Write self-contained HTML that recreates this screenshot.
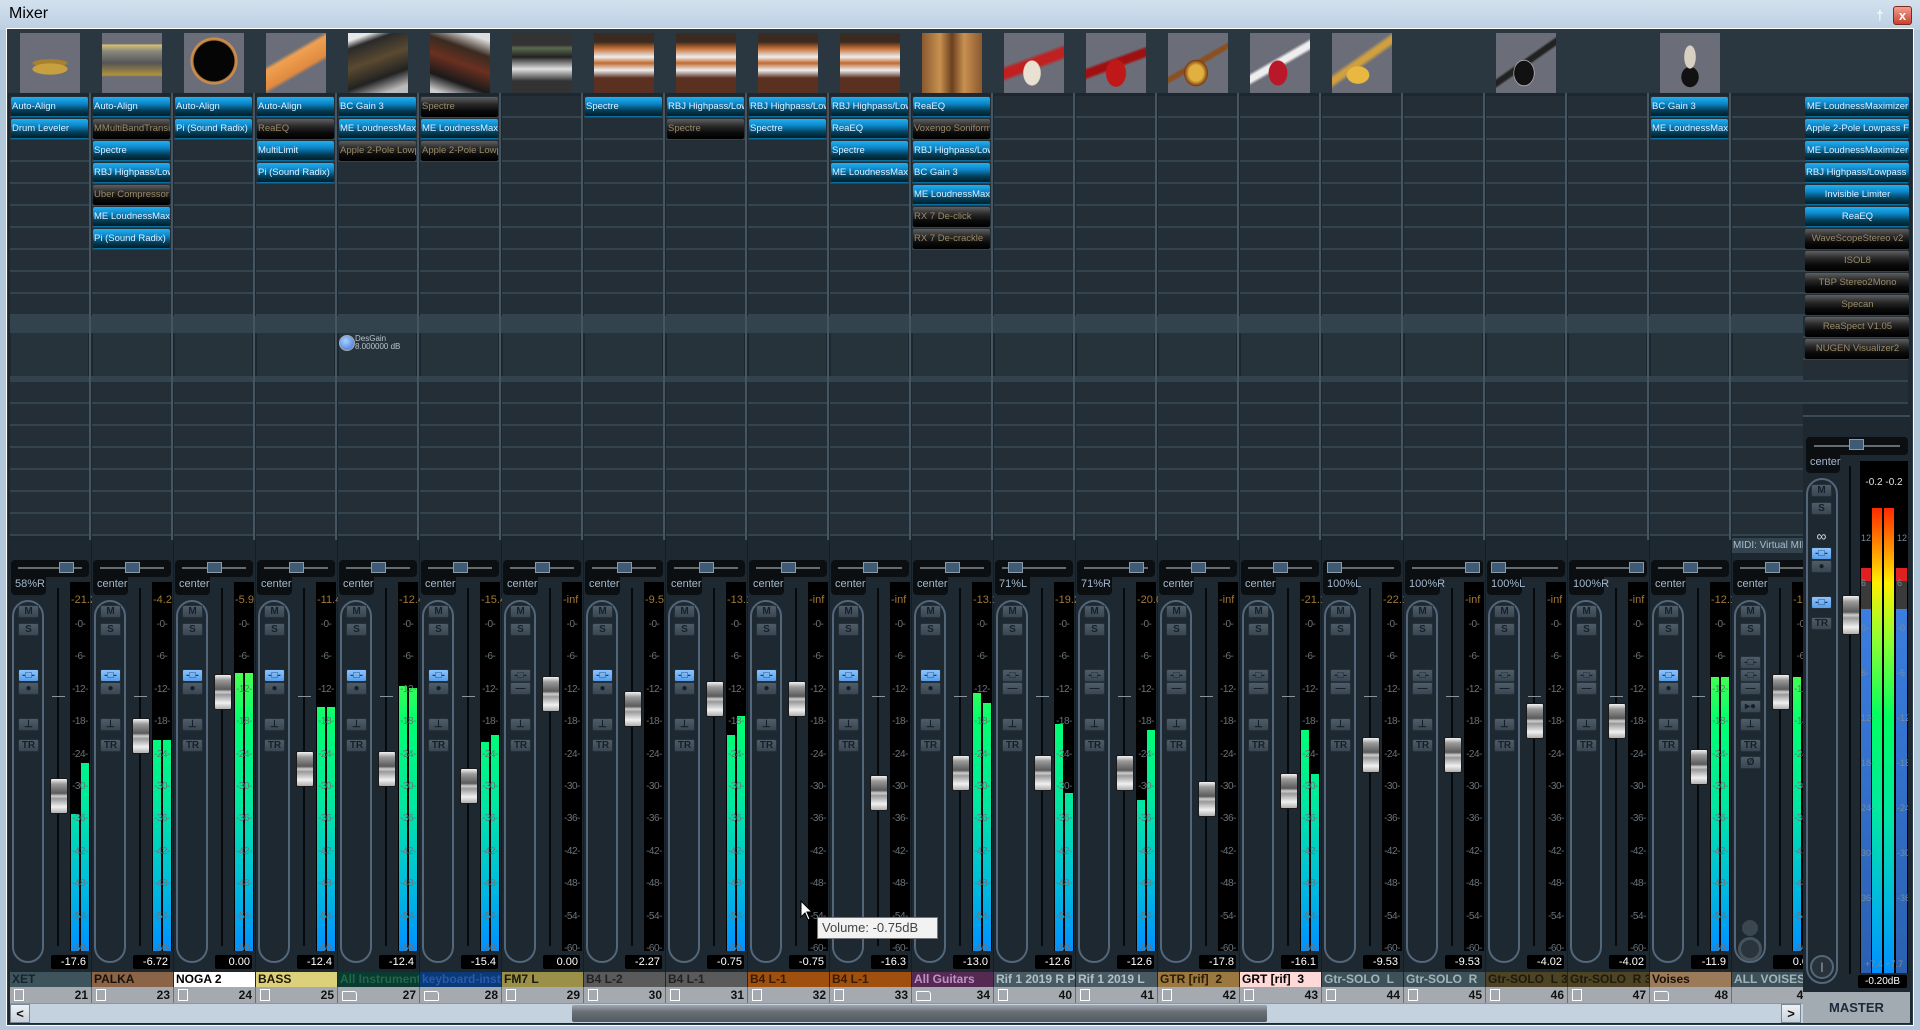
<!DOCTYPE html>
<html><head><meta charset="utf-8"><style>
*{margin:0;padding:0;box-sizing:border-box}
body{width:1920px;height:1030px;overflow:hidden;background:#b3c7db;font-family:"Liberation Sans",sans-serif;position:relative}
.tb{position:absolute;left:0;top:0;width:1920px;height:30px;background:linear-gradient(#d3e1ee,#bccfe2)}
.tt{position:absolute;left:9px;top:5px;font-size:16px;color:#000}
.win{position:absolute;left:7px;top:29px;width:1906px;height:996px;background:#1c2730;border:1px solid #2c3a46;box-shadow:0 0 0 1px #fff}
.top{position:absolute;left:8px;top:30px;width:1904px;height:63px;background:#2a3640}
.s{position:absolute;top:0;width:82px;height:1003px}
.im{position:absolute;left:10px;top:33px;width:60px;height:60px;background:#6b6e79;overflow:hidden}
.sl{position:absolute;left:0;top:96px;width:79px;height:220px;background:repeating-linear-gradient(#232e36 0 20px,#34444e 20px 22px)}
.sl2{position:absolute;left:0;top:382px;width:79px;height:154px;background:repeating-linear-gradient(#232e36 0 20px,#34444e 20px 22px)}
.bd1{position:absolute;left:0;top:316px;width:82px;height:17px;background:#33434e}
.snd{position:absolute;left:1px;top:333px;width:77px;height:43px;background:#27333b}
.bd2{position:absolute;left:0;top:376px;width:82px;height:6px;background:#33434e}
.dv{position:absolute;left:79px;top:93px;width:2px;height:447px;border-left:2px solid #455562}
.low{position:absolute;left:0;top:540px;width:82px;height:432px;background:#1d2830;border-right:1px solid #141d23}
.i{position:absolute;left:1px;width:77px;height:20px;font-size:9.5px;line-height:19px;padding-left:1px;white-space:nowrap;overflow:hidden;border-radius:2px}
.a{background:linear-gradient(#22b0f0 0%,#0b86c8 35%,#04405c 70%,#021c26 100%);color:#dcefff;border-bottom:1px solid #0b6fa0}
.d{background:linear-gradient(#606060 0%,#2a2a2a 35%,#0a0a0a 70%,#000 100%);color:#9a8a68}
.pan{position:absolute;left:1px;top:560px;width:78px;height:17px;background:#0b0f12;border-radius:4px}
.pan:before{content:"";position:absolute;left:7px;top:7px;width:64px;height:2px;background:#666c70}
.pan i{position:absolute;top:2px;width:15px;height:11px;background:#3e5a74;border:1px solid #8a9aa8}
.pt{position:absolute;left:1px;top:574px;width:35px;height:21px;background:#0b0f12;border-radius:0 0 4px 4px;color:#a4b8cc;font-size:11px;line-height:20px;padding-left:4px;white-space:nowrap}
.g{position:absolute;left:2px;top:600px;width:32px;height:363px;border:2px solid #53667a;border-radius:16px}
.b{position:absolute;left:8px;width:21px;height:13px;background:linear-gradient(#4f5d69,#3a4651);border:1px solid #24303a;border-radius:2px;color:#15202a;font:bold 10px/11px "Liberation Sans",sans-serif;text-align:center}
.bl{background:linear-gradient(#8cc4ff,#5a9ee8);color:#163a66}
.mt{position:absolute;left:60px;top:582px;width:20px;height:369px;background:#000;overflow:hidden}
.bar{position:absolute;width:8px;bottom:0;background:linear-gradient(#c0ff30 0%,#60ff40 20%,#00ff70 38%,#00e8a0 60%,#00c0d8 80%,#0090ff 100%);background-size:8px 369px;background-position:bottom}
.sc{position:absolute;left:57px;top:609px;width:26px;text-align:center;font-size:10px;line-height:32.4px;color:#6a747c;letter-spacing:-.5px}
.pk{position:absolute;left:61px;top:594px;font-size:11px;color:#a07838;white-space:nowrap;width:21px;overflow:hidden}
.ft{position:absolute;left:47px;top:588px;width:2px;height:358px;background:#070a0c}
.cm{position:absolute;left:42px;top:696px;width:13px;height:1px;background:#8a949c}
.cap{position:absolute;left:40px;width:18px;height:36px;border:1px solid #1a1a1a;border-radius:2px;background:linear-gradient(#f4f4f4,#9a9a9a 15%,#5a5a5a 42%,#cfcfcf 50%,#9a9a9a 58%,#f0f0f0 82%,#b0b0b0)}
.vb{position:absolute;left:41px;top:955px;width:37px;height:14px;background:#000;border-radius:2px;color:#fff;font-size:11px;line-height:14px;text-align:right;padding-right:2px}
.nm{position:absolute;left:0;top:972px;width:82px;height:15px;font:bold 12px/15px "Liberation Sans",sans-serif;padding-left:2px;white-space:nowrap;overflow:hidden;border-right:1px solid #1c2730}
.nu{position:absolute;left:0;top:987px;width:82px;height:16px;background:#a4aab0;font:bold 12px/16px "Liberation Sans",sans-serif;text-align:right;padding-right:3px;color:#111;border-right:1px solid #6a7078}
.ic{position:absolute;left:4px;top:2px;width:10px;height:12px;border:1px solid #fff}
.fo{position:absolute;left:4px;top:4px;width:15px;height:10px;border:1px solid #fff;border-radius:1px 3px 1px 1px}
</style></head><body>
<div class="tb"><div class="tt">Mixer</div>
<div style="position:absolute;left:1876px;top:7px;font-size:14px;color:#fff">&#x2020;</div>
<div style="position:absolute;left:1893px;top:6px;width:19px;height:19px;background:linear-gradient(#f0a090,#c84030);border:1px solid #7a2a20;border-radius:3px;color:#fff;font:bold 13px/17px 'Liberation Sans';text-align:center">x</div></div>
<div class="win"></div>
<div class="top"></div>

<div class="s" style="left:10px"><div class="im" style="background:radial-gradient(ellipse 28px 9px at 30px 36px,#c8a040 60%,transparent 65%),radial-gradient(ellipse 28px 6px at 30px 30px,#a88030 60%,transparent 65%),#6b6e79"></div>
<div class="sl"></div><div class="bd1"></div><div class="snd"></div><div class="bd2"></div><div class="sl2"></div><div class="dv"></div>
<div class="i a" style="top:97px">Auto-Align</div><div class="i a" style="top:119px">Drum Leveler</div>
<div class="low"></div><div class="pan"><i style="left:48px"></i></div><div class="pt">58%R</div>
<div class="g"></div><div class="b" style="top:605px">M</div><div class="b" style="top:623px">S</div><div class="b bl" style="top:669px">-□-</div><div class="b" style="top:682px">●</div><div class="b" style="top:718px">⊥</div><div class="b" style="top:739px">TR</div>
<div class="mt"><div class="bar" style="left:1px;top:232px"></div><div class="bar" style="left:11px;top:181px"></div></div><div class="pk">-21.2</div>
<div class="sc">-0-<br>-6-<br>-12-<br>-18-<br>-24-<br>-30-<br>-36-<br>-42-<br>-48-<br>-54-<br>-60-</div>
<div class="ft"></div><div class="cm"></div><div class="cap" style="top:778px"></div><div class="vb">-17.6</div>
<div class="nm" style="background:#3d545c;color:#16242a">XET</div><div class="nu"><span class="ic"></span>21</div></div>

<div class="s" style="left:92px"><div class="im" style="background:linear-gradient(#6b6e79 18%,#d8c070 20%,#8a8a80 30%,#555 50%,#b09040 70%,#6b6e79 73%)"></div>
<div class="sl"></div><div class="bd1"></div><div class="snd"></div><div class="bd2"></div><div class="sl2"></div><div class="dv"></div>
<div class="i a" style="top:97px">Auto-Align</div><div class="i d" style="top:119px">MMultiBandTransie</div><div class="i a" style="top:141px">Spectre</div><div class="i a" style="top:163px">RBJ Highpass/Low</div><div class="i d" style="top:185px">Uber Compressor</div><div class="i a" style="top:207px">ME LoudnessMaxir</div><div class="i a" style="top:229px">Pi (Sound Radix)</div>
<div class="low"></div><div class="pan"><i style="left:32px"></i></div><div class="pt">center</div>
<div class="g"></div><div class="b" style="top:605px">M</div><div class="b" style="top:623px">S</div><div class="b bl" style="top:669px">-□-</div><div class="b" style="top:682px">●</div><div class="b" style="top:718px">⊥</div><div class="b" style="top:739px">TR</div>
<div class="mt"><div class="bar" style="left:1px;top:158px"></div><div class="bar" style="left:11px;top:158px"></div></div><div class="pk">-4.2</div>
<div class="sc">-0-<br>-6-<br>-12-<br>-18-<br>-24-<br>-30-<br>-36-<br>-42-<br>-48-<br>-54-<br>-60-</div>
<div class="ft"></div><div class="cm"></div><div class="cap" style="top:718px"></div><div class="vb">-6.72</div>
<div class="nm" style="background:#8b6447;color:#1a1008">PALKA</div><div class="nu"><span class="ic"></span>23</div></div>

<div class="s" style="left:174px"><div class="im" style="background:radial-gradient(circle at 30px 28px,#050505 20px,#c08040 21px,#d09050 23px,#6b6e79 24px)"></div>
<div class="sl"></div><div class="bd1"></div><div class="snd"></div><div class="bd2"></div><div class="sl2"></div><div class="dv"></div>
<div class="i a" style="top:97px">Auto-Align</div><div class="i a" style="top:119px">Pi (Sound Radix)</div>
<div class="low"></div><div class="pan"><i style="left:32px"></i></div><div class="pt">center</div>
<div class="g"></div><div class="b" style="top:605px">M</div><div class="b" style="top:623px">S</div><div class="b bl" style="top:669px">-□-</div><div class="b" style="top:682px">●</div><div class="b" style="top:718px">⊥</div><div class="b" style="top:739px">TR</div>
<div class="mt"><div class="bar" style="left:1px;top:91px"></div><div class="bar" style="left:11px;top:91px"></div></div><div class="pk">-5.9</div>
<div class="sc">-0-<br>-6-<br>-12-<br>-18-<br>-24-<br>-30-<br>-36-<br>-42-<br>-48-<br>-54-<br>-60-</div>
<div class="ft"></div><div class="cm"></div><div class="cap" style="top:674px"></div><div class="vb">0.00</div>
<div class="nm" style="background:#fff;color:#000">NOGA 2</div><div class="nu"><span class="ic"></span>24</div></div>

<div class="s" style="left:256px"><div class="im" style="background:linear-gradient(150deg,#6b6e79 35%,#f0a050 40%,#e08a40 60%,#6b6e79 65%)"></div>
<div class="sl"></div><div class="bd1"></div><div class="snd"></div><div class="bd2"></div><div class="sl2"></div><div class="dv"></div>
<div class="i a" style="top:97px">Auto-Align</div><div class="i d" style="top:119px">ReaEQ</div><div class="i a" style="top:141px">MultiLimit</div><div class="i a" style="top:163px">Pi (Sound Radix)</div>
<div class="low"></div><div class="pan"><i style="left:32px"></i></div><div class="pt">center</div>
<div class="g"></div><div class="b" style="top:605px">M</div><div class="b" style="top:623px">S</div><div class="b bl" style="top:669px">-□-</div><div class="b" style="top:682px">●</div><div class="b" style="top:718px">⊥</div><div class="b" style="top:739px">TR</div>
<div class="mt"><div class="bar" style="left:1px;top:125px"></div><div class="bar" style="left:11px;top:125px"></div></div><div class="pk">-11.4</div>
<div class="sc">-0-<br>-6-<br>-12-<br>-18-<br>-24-<br>-30-<br>-36-<br>-42-<br>-48-<br>-54-<br>-60-</div>
<div class="ft"></div><div class="cm"></div><div class="cap" style="top:751px"></div><div class="vb">-12.4</div>
<div class="nm" style="background:#dcd07a;color:#1a1808">BASS</div><div class="nu"><span class="ic"></span>25</div></div>

<div class="s" style="left:338px"><div class="im" style="background:linear-gradient(160deg,#e8e8e8 10%,#2a2a2a 20%,#5a4a30 45%,#222 70%,#bbb 90%)"></div>
<div class="sl"></div><div class="bd1"></div><div class="snd"></div><div class="bd2"></div><div class="sl2"></div><div class="dv"></div>
<div class="i a" style="top:97px">BC Gain 3</div><div class="i a" style="top:119px">ME LoudnessMaxir</div><div class="i d" style="top:141px">Apple 2-Pole Lowpa</div>
<div style="position:absolute;left:1px;top:335px;width:16px;height:16px;border-radius:50%;background:radial-gradient(circle at 40% 35%,#a8d0ff,#3a70d0);border:1px solid #aaa"></div>
<div style="position:absolute;left:17px;top:335px;font-size:8px;line-height:8px;color:#b8c4cc">DesGain<br>8.000000 dB</div>
<div class="low"></div><div class="pan"><i style="left:32px"></i></div><div class="pt">center</div>
<div class="g"></div><div class="b" style="top:605px">M</div><div class="b" style="top:623px">S</div><div class="b bl" style="top:669px">-□-</div><div class="b" style="top:682px">●</div><div class="b" style="top:718px">⊥</div><div class="b" style="top:739px">TR</div>
<div class="mt"><div class="bar" style="left:1px;top:104px"></div><div class="bar" style="left:11px;top:106px"></div></div><div class="pk">-12.4</div>
<div class="sc">-0-<br>-6-<br>-12-<br>-18-<br>-24-<br>-30-<br>-36-<br>-42-<br>-48-<br>-54-<br>-60-</div>
<div class="ft"></div><div class="cm"></div><div class="cap" style="top:751px"></div><div class="vb">-12.4</div>
<div class="nm" style="background:#0a3a30;color:#1f6a4a">All Instruments</div><div class="nu"><span class="fo"></span>27</div></div>

<div class="s" style="left:420px"><div class="im" style="background:linear-gradient(200deg,#ddd 10%,#3a2a20 30%,#6a3020 50%,#1a1a1a 75%,#ccc 95%)"></div>
<div class="sl"></div><div class="bd1"></div><div class="snd"></div><div class="bd2"></div><div class="sl2"></div><div class="dv"></div>
<div class="i d" style="top:97px">Spectre</div><div class="i a" style="top:119px">ME LoudnessMaxir</div><div class="i d" style="top:141px">Apple 2-Pole Lowpa</div>
<div class="low"></div><div class="pan"><i style="left:32px"></i></div><div class="pt">center</div>
<div class="g"></div><div class="b" style="top:605px">M</div><div class="b" style="top:623px">S</div><div class="b bl" style="top:669px">-□-</div><div class="b" style="top:682px">●</div><div class="b" style="top:718px">⊥</div><div class="b" style="top:739px">TR</div>
<div class="mt"><div class="bar" style="left:1px;top:160px"></div><div class="bar" style="left:11px;top:153px"></div></div><div class="pk">-15.4</div>
<div class="sc">-0-<br>-6-<br>-12-<br>-18-<br>-24-<br>-30-<br>-36-<br>-42-<br>-48-<br>-54-<br>-60-</div>
<div class="ft"></div><div class="cm"></div><div class="cap" style="top:768px"></div><div class="vb">-15.4</div>
<div class="nm" style="background:#0b3a78;color:#2a5ab0">keyboard-instr</div><div class="nu"><span class="fo"></span>28</div></div>

<div class="s" style="left:502px"><div class="im" style="background:linear-gradient(#333 20%,#5a6a50 25%,#222 40%,#e0e0e0 60%,#333 80%)"></div>
<div class="sl"></div><div class="bd1"></div><div class="snd"></div><div class="bd2"></div><div class="sl2"></div><div class="dv"></div>
<div class="low"></div><div class="pan"><i style="left:32px"></i></div><div class="pt">center</div>
<div class="g"></div><div class="b" style="top:605px">M</div><div class="b" style="top:623px">S</div><div class="b" style="top:669px">-□-</div><div class="b" style="top:682px">—</div><div class="b" style="top:718px">⊥</div><div class="b" style="top:739px">TR</div>
<div class="mt"></div><div class="pk">-inf</div>
<div class="sc">-0-<br>-6-<br>-12-<br>-18-<br>-24-<br>-30-<br>-36-<br>-42-<br>-48-<br>-54-<br>-60-</div>
<div class="ft"></div><div class="cm"></div><div class="cap" style="top:676px"></div><div class="vb">0.00</div>
<div class="nm" style="background:#9a9048;color:#1a1808">FM7 L</div><div class="nu"><span class="ic"></span>29</div></div>

<div class="s" style="left:584px"><div class="im" style="background:linear-gradient(#3a2a20 15%,#c06a30 25%,#eee 40%,#c06a30 50%,#eee 62%,#5a3020 75%)"></div>
<div class="sl"></div><div class="bd1"></div><div class="snd"></div><div class="bd2"></div><div class="sl2"></div><div class="dv"></div>
<div class="i a" style="top:97px">Spectre</div>
<div class="low"></div><div class="pan"><i style="left:32px"></i></div><div class="pt">center</div>
<div class="g"></div><div class="b" style="top:605px">M</div><div class="b" style="top:623px">S</div><div class="b bl" style="top:669px">-□-</div><div class="b" style="top:682px">●</div><div class="b" style="top:718px">⊥</div><div class="b" style="top:739px">TR</div>
<div class="mt"></div><div class="pk">-9.5</div>
<div class="sc">-0-<br>-6-<br>-12-<br>-18-<br>-24-<br>-30-<br>-36-<br>-42-<br>-48-<br>-54-<br>-60-</div>
<div class="ft"></div><div class="cm"></div><div class="cap" style="top:691px"></div><div class="vb">-2.27</div>
<div class="nm" style="background:#5a5a5a;color:#222">B4 L-2</div><div class="nu"><span class="ic"></span>30</div></div>

<div class="s" style="left:666px"><div class="im" style="background:linear-gradient(#3a2a20 15%,#c06a30 25%,#eee 40%,#c06a30 50%,#eee 62%,#5a3020 75%)"></div>
<div class="sl"></div><div class="bd1"></div><div class="snd"></div><div class="bd2"></div><div class="sl2"></div><div class="dv"></div>
<div class="i a" style="top:97px">RBJ Highpass/Low</div><div class="i d" style="top:119px">Spectre</div>
<div class="low"></div><div class="pan"><i style="left:32px"></i></div><div class="pt">center</div>
<div class="g"></div><div class="b" style="top:605px">M</div><div class="b" style="top:623px">S</div><div class="b bl" style="top:669px">-□-</div><div class="b" style="top:682px">●</div><div class="b" style="top:718px">⊥</div><div class="b" style="top:739px">TR</div>
<div class="mt"><div class="bar" style="left:1px;top:153px"></div><div class="bar" style="left:11px;top:134px"></div></div><div class="pk">-13.1</div>
<div class="sc">-0-<br>-6-<br>-12-<br>-18-<br>-24-<br>-30-<br>-36-<br>-42-<br>-48-<br>-54-<br>-60-</div>
<div class="ft"></div><div class="cm"></div><div class="cap" style="top:681px"></div><div class="vb">-0.75</div>
<div class="nm" style="background:#5a5a5a;color:#222">B4 L-1</div><div class="nu"><span class="ic"></span>31</div></div>

<div class="s" style="left:748px"><div class="im" style="background:linear-gradient(#3a2a20 15%,#c06a30 25%,#eee 40%,#c06a30 50%,#eee 62%,#5a3020 75%)"></div>
<div class="sl"></div><div class="bd1"></div><div class="snd"></div><div class="bd2"></div><div class="sl2"></div><div class="dv"></div>
<div class="i a" style="top:97px">RBJ Highpass/Low</div><div class="i a" style="top:119px">Spectre</div>
<div class="low"></div><div class="pan"><i style="left:32px"></i></div><div class="pt">center</div>
<div class="g"></div><div class="b" style="top:605px">M</div><div class="b" style="top:623px">S</div><div class="b bl" style="top:669px">-□-</div><div class="b" style="top:682px">●</div><div class="b" style="top:718px">⊥</div><div class="b" style="top:739px">TR</div>
<div class="mt"></div><div class="pk">-inf</div>
<div class="sc">-0-<br>-6-<br>-12-<br>-18-<br>-24-<br>-30-<br>-36-<br>-42-<br>-48-<br>-54-<br>-60-</div>
<div class="ft"></div><div class="cm"></div><div class="cap" style="top:681px"></div><div class="vb">-0.75</div>
<div class="nm" style="background:#a0500e;color:#3a1a00">B4 L-1</div><div class="nu"><span class="ic"></span>32</div></div>

<div class="s" style="left:830px"><div class="im" style="background:linear-gradient(#3a2a20 15%,#c06a30 25%,#eee 40%,#c06a30 50%,#eee 62%,#5a3020 75%)"></div>
<div class="sl"></div><div class="bd1"></div><div class="snd"></div><div class="bd2"></div><div class="sl2"></div><div class="dv"></div>
<div class="i a" style="top:97px">RBJ Highpass/Low</div><div class="i a" style="top:119px">ReaEQ</div><div class="i a" style="top:141px">Spectre</div><div class="i a" style="top:163px">ME LoudnessMaxir</div>
<div class="low"></div><div class="pan"><i style="left:32px"></i></div><div class="pt">center</div>
<div class="g"></div><div class="b" style="top:605px">M</div><div class="b" style="top:623px">S</div><div class="b bl" style="top:669px">-□-</div><div class="b" style="top:682px">●</div><div class="b" style="top:718px">⊥</div><div class="b" style="top:739px">TR</div>
<div class="mt"></div><div class="pk">-inf</div>
<div class="sc">-0-<br>-6-<br>-12-<br>-18-<br>-24-<br>-30-<br>-36-<br>-42-<br>-48-<br>-54-<br>-60-</div>
<div class="ft"></div><div class="cm"></div><div class="cap" style="top:775px"></div><div class="vb">-16.3</div>
<div class="nm" style="background:#a0500e;color:#3a1a00">B4 L-1</div><div class="nu"><span class="ic"></span>33</div></div>

<div class="s" style="left:912px"><div class="im" style="background:linear-gradient(90deg,#8a5a30,#c89050 30%,#6a4020 50%,#c89050 70%,#8a5a30),#6b6e79"></div>
<div class="sl"></div><div class="bd1"></div><div class="snd"></div><div class="bd2"></div><div class="sl2"></div><div class="dv"></div>
<div class="i a" style="top:97px">ReaEQ</div><div class="i d" style="top:119px">Voxengo Soniform</div><div class="i a" style="top:141px">RBJ Highpass/Low</div><div class="i a" style="top:163px">BC Gain 3</div><div class="i a" style="top:185px">ME LoudnessMaxir</div><div class="i d" style="top:207px">RX 7 De-click</div><div class="i d" style="top:229px">RX 7 De-crackle</div>
<div class="low"></div><div class="pan"><i style="left:32px"></i></div><div class="pt">center</div>
<div class="g"></div><div class="b" style="top:605px">M</div><div class="b" style="top:623px">S</div><div class="b bl" style="top:669px">-□-</div><div class="b" style="top:682px">●</div><div class="b" style="top:718px">⊥</div><div class="b" style="top:739px">TR</div>
<div class="mt"><div class="bar" style="left:1px;top:111px"></div><div class="bar" style="left:11px;top:121px"></div></div><div class="pk">-13.1</div>
<div class="sc">-0-<br>-6-<br>-12-<br>-18-<br>-24-<br>-30-<br>-36-<br>-42-<br>-48-<br>-54-<br>-60-</div>
<div class="ft"></div><div class="cm"></div><div class="cap" style="top:755px"></div><div class="vb">-13.0</div>
<div class="nm" style="background:#552a52;color:#c090c8">All Guitars</div><div class="nu"><span class="fo"></span>34</div></div>

<div class="s" style="left:994px"><div class="im" style="background:radial-gradient(ellipse 14px 20px at 28px 40px,#e8e0d0 60%,transparent 65%),linear-gradient(160deg,#6b6e79 40%,#c02020 45%,#c02020 55%,#6b6e79 60%)"></div>
<div class="sl"></div><div class="bd1"></div><div class="snd"></div><div class="bd2"></div><div class="sl2"></div><div class="dv"></div>
<div class="low"></div><div class="pan"><i style="left:13px"></i></div><div class="pt">71%L</div>
<div class="g"></div><div class="b" style="top:605px">M</div><div class="b" style="top:623px">S</div><div class="b" style="top:669px">-□-</div><div class="b" style="top:682px">—</div><div class="b" style="top:718px">⊥</div><div class="b" style="top:739px">TR</div>
<div class="mt"><div class="bar" style="left:1px;top:142px"></div><div class="bar" style="left:11px;top:211px"></div></div><div class="pk">-19.2</div>
<div class="sc">-0-<br>-6-<br>-12-<br>-18-<br>-24-<br>-30-<br>-36-<br>-42-<br>-48-<br>-54-<br>-60-</div>
<div class="ft"></div><div class="cm"></div><div class="cap" style="top:755px"></div><div class="vb">-12.6</div>
<div class="nm" style="background:#4a5a62;color:#b0c0c8">Rif 1 2019 R Pitch</div><div class="nu"><span class="ic"></span>40</div></div>

<div class="s" style="left:1076px"><div class="im" style="background:radial-gradient(ellipse 16px 22px at 30px 40px,#c01818 60%,transparent 65%),linear-gradient(160deg,#6b6e79 42%,#a01010 46%,#a01010 54%,#6b6e79 58%)"></div>
<div class="sl"></div><div class="bd1"></div><div class="snd"></div><div class="bd2"></div><div class="sl2"></div><div class="dv"></div>
<div class="low"></div><div class="pan"><i style="left:52px"></i></div><div class="pt">71%R</div>
<div class="g"></div><div class="b" style="top:605px">M</div><div class="b" style="top:623px">S</div><div class="b" style="top:669px">-□-</div><div class="b" style="top:682px">—</div><div class="b" style="top:718px">⊥</div><div class="b" style="top:739px">TR</div>
<div class="mt"><div class="bar" style="left:1px;top:218px"></div><div class="bar" style="left:11px;top:148px"></div></div><div class="pk">-20.0</div>
<div class="sc">-0-<br>-6-<br>-12-<br>-18-<br>-24-<br>-30-<br>-36-<br>-42-<br>-48-<br>-54-<br>-60-</div>
<div class="ft"></div><div class="cm"></div><div class="cap" style="top:755px"></div><div class="vb">-12.6</div>
<div class="nm" style="background:#4a5a62;color:#b0c0c8">Rif 1 2019 L</div><div class="nu"><span class="ic"></span>41</div></div>

<div class="s" style="left:1158px"><div class="im" style="background:radial-gradient(ellipse 18px 20px at 28px 40px,#e0b040 40%,#7a3a10 65%,transparent 68%),linear-gradient(150deg,#6b6e79 45%,#8a5020 48%,#8a5020 52%,#6b6e79 55%)"></div>
<div class="sl"></div><div class="bd1"></div><div class="snd"></div><div class="bd2"></div><div class="sl2"></div><div class="dv"></div>
<div class="low"></div><div class="pan"><i style="left:32px"></i></div><div class="pt">center</div>
<div class="g"></div><div class="b" style="top:605px">M</div><div class="b" style="top:623px">S</div><div class="b" style="top:669px">-□-</div><div class="b" style="top:682px">—</div><div class="b" style="top:718px">⊥</div><div class="b" style="top:739px">TR</div>
<div class="mt"></div><div class="pk">-inf</div>
<div class="sc">-0-<br>-6-<br>-12-<br>-18-<br>-24-<br>-30-<br>-36-<br>-42-<br>-48-<br>-54-<br>-60-</div>
<div class="ft"></div><div class="cm"></div><div class="cap" style="top:781px"></div><div class="vb">-17.8</div>
<div class="nm" style="background:#9a7840;color:#2a1a00">GTR [rif]&nbsp; 2</div><div class="nu"><span class="ic"></span>42</div></div>

<div class="s" style="left:1240px"><div class="im" style="background:radial-gradient(ellipse 15px 20px at 28px 40px,#b81828 60%,transparent 65%),linear-gradient(150deg,#6b6e79 42%,#eee 46%,#eee 52%,#6b6e79 56%)"></div>
<div class="sl"></div><div class="bd1"></div><div class="snd"></div><div class="bd2"></div><div class="sl2"></div><div class="dv"></div>
<div class="low"></div><div class="pan"><i style="left:32px"></i></div><div class="pt">center</div>
<div class="g"></div><div class="b" style="top:605px">M</div><div class="b" style="top:623px">S</div><div class="b" style="top:669px">-□-</div><div class="b" style="top:682px">—</div><div class="b" style="top:718px">⊥</div><div class="b" style="top:739px">TR</div>
<div class="mt"><div class="bar" style="left:1px;top:148px"></div><div class="bar" style="left:11px;top:192px"></div></div><div class="pk">-21.1</div>
<div class="sc">-0-<br>-6-<br>-12-<br>-18-<br>-24-<br>-30-<br>-36-<br>-42-<br>-48-<br>-54-<br>-60-</div>
<div class="ft"></div><div class="cm"></div><div class="cap" style="top:773px"></div><div class="vb">-16.1</div>
<div class="nm" style="background:#ffd8d8;color:#000">GRT [rif]&nbsp; 3</div><div class="nu"><span class="ic"></span>43</div></div>

<div class="s" style="left:1322px"><div class="im" style="background:radial-gradient(ellipse 18px 14px at 26px 42px,#e8b840 60%,transparent 65%),linear-gradient(145deg,#6b6e79 40%,#d0a040 45%,#d0a040 50%,#6b6e79 55%)"></div>
<div class="sl"></div><div class="bd1"></div><div class="snd"></div><div class="bd2"></div><div class="sl2"></div><div class="dv"></div>
<div class="low"></div><div class="pan"><i style="left:4px"></i></div><div class="pt">100%L</div>
<div class="g"></div><div class="b" style="top:605px">M</div><div class="b" style="top:623px">S</div><div class="b" style="top:669px">-□-</div><div class="b" style="top:682px">—</div><div class="b" style="top:718px">⊥</div><div class="b" style="top:739px">TR</div>
<div class="mt"></div><div class="pk">-22.1</div>
<div class="sc">-0-<br>-6-<br>-12-<br>-18-<br>-24-<br>-30-<br>-36-<br>-42-<br>-48-<br>-54-<br>-60-</div>
<div class="ft"></div><div class="cm"></div><div class="cap" style="top:737px"></div><div class="vb">-9.53</div>
<div class="nm" style="background:#3e5058;color:#a0b4bc">Gtr-SOLO&nbsp; L</div><div class="nu"><span class="ic"></span>44</div></div>

<div class="s" style="left:1404px">
<div class="sl"></div><div class="bd1"></div><div class="snd"></div><div class="bd2"></div><div class="sl2"></div><div class="dv"></div>
<div class="low"></div><div class="pan"><i style="left:60px"></i></div><div class="pt">100%R</div>
<div class="g"></div><div class="b" style="top:605px">M</div><div class="b" style="top:623px">S</div><div class="b" style="top:669px">-□-</div><div class="b" style="top:682px">—</div><div class="b" style="top:718px">⊥</div><div class="b" style="top:739px">TR</div>
<div class="mt"></div><div class="pk">-inf</div>
<div class="sc">-0-<br>-6-<br>-12-<br>-18-<br>-24-<br>-30-<br>-36-<br>-42-<br>-48-<br>-54-<br>-60-</div>
<div class="ft"></div><div class="cm"></div><div class="cap" style="top:737px"></div><div class="vb">-9.53</div>
<div class="nm" style="background:#3e5058;color:#a0b4bc">Gtr-SOLO&nbsp; R</div><div class="nu"><span class="ic"></span>45</div></div>

<div class="s" style="left:1486px"><div class="im" style="background:radial-gradient(ellipse 16px 20px at 28px 40px,#111 60%,#ccc 64%,transparent 67%),linear-gradient(145deg,#6b6e79 44%,#222 47%,#222 52%,#6b6e79 55%)"></div>
<div class="sl"></div><div class="bd1"></div><div class="snd"></div><div class="bd2"></div><div class="sl2"></div><div class="dv"></div>
<div class="low"></div><div class="pan"><i style="left:4px"></i></div><div class="pt">100%L</div>
<div class="g"></div><div class="b" style="top:605px">M</div><div class="b" style="top:623px">S</div><div class="b" style="top:669px">-□-</div><div class="b" style="top:682px">—</div><div class="b" style="top:718px">⊥</div><div class="b" style="top:739px">TR</div>
<div class="mt"></div><div class="pk">-inf</div>
<div class="sc">-0-<br>-6-<br>-12-<br>-18-<br>-24-<br>-30-<br>-36-<br>-42-<br>-48-<br>-54-<br>-60-</div>
<div class="ft"></div><div class="cm"></div><div class="cap" style="top:703px"></div><div class="vb">-4.02</div>
<div class="nm" style="background:#4d4426;color:#1e1a0a">Gtr-SOLO&nbsp; L 38</div><div class="nu"><span class="ic"></span>46</div></div>

<div class="s" style="left:1568px">
<div class="sl"></div><div class="bd1"></div><div class="snd"></div><div class="bd2"></div><div class="sl2"></div><div class="dv"></div>
<div class="low"></div><div class="pan"><i style="left:60px"></i></div><div class="pt">100%R</div>
<div class="g"></div><div class="b" style="top:605px">M</div><div class="b" style="top:623px">S</div><div class="b" style="top:669px">-□-</div><div class="b" style="top:682px">—</div><div class="b" style="top:718px">⊥</div><div class="b" style="top:739px">TR</div>
<div class="mt"></div><div class="pk">-inf</div>
<div class="sc">-0-<br>-6-<br>-12-<br>-18-<br>-24-<br>-30-<br>-36-<br>-42-<br>-48-<br>-54-<br>-60-</div>
<div class="ft"></div><div class="cm"></div><div class="cap" style="top:703px"></div><div class="vb">-4.02</div>
<div class="nm" style="background:#4d4426;color:#1e1a0a">Gtr-SOLO&nbsp; R 39</div><div class="nu"><span class="ic"></span>47</div></div>

<div class="s" style="left:1650px"><div class="im" style="background:radial-gradient(ellipse 8px 16px at 30px 24px,#d8d0c0 70%,transparent 75%),radial-gradient(ellipse 12px 14px at 30px 44px,#111 70%,transparent 75%),#6b6e79"></div>
<div class="sl"></div><div class="bd1"></div><div class="snd"></div><div class="bd2"></div><div class="sl2"></div><div class="dv"></div>
<div class="i a" style="top:97px">BC Gain 3</div><div class="i a" style="top:119px">ME LoudnessMaxir</div>
<div class="low"></div><div class="pan"><i style="left:32px"></i></div><div class="pt">center</div>
<div class="g"></div><div class="b" style="top:605px">M</div><div class="b" style="top:623px">S</div><div class="b bl" style="top:669px">-□-</div><div class="b" style="top:682px">●</div><div class="b" style="top:718px">⊥</div><div class="b" style="top:739px">TR</div>
<div class="mt"><div class="bar" style="left:1px;top:95px"></div><div class="bar" style="left:11px;top:95px"></div></div><div class="pk">-12.1</div>
<div class="sc">-0-<br>-6-<br>-12-<br>-18-<br>-24-<br>-30-<br>-36-<br>-42-<br>-48-<br>-54-<br>-60-</div>
<div class="ft"></div><div class="cm"></div><div class="cap" style="top:749px"></div><div class="vb">-11.9</div>
<div class="nm" style="background:#9a7a58;color:#1a1008">Voises</div><div class="nu"><span class="fo"></span>48</div></div>

<div class="s" style="left:1732px;width:71px;overflow:hidden">
<div class="sl"></div><div class="bd1"></div><div class="snd"></div><div class="bd2"></div><div class="sl2"></div>
<div class="low"></div>
<div style="position:absolute;left:0;top:538px;width:71px;height:15px;background:#34444f;color:#a8bcd0;font-size:10px;line-height:15px;white-space:nowrap;padding-left:1px">MIDI: Virtual MIDI</div>
<div class="pan"><i style="left:32px"></i></div><div class="pt">center</div>
<div class="g"></div><div class="b" style="top:605px">M</div><div class="b" style="top:623px">S</div><div class="b" style="top:656px">-□-</div><div class="b" style="top:669px">-□-</div><div class="b" style="top:682px">—</div><div class="b" style="top:700px">▸●</div><div class="b" style="top:718px">⊥</div><div class="b" style="top:739px">TR</div><div class="b" style="top:756px">Ø</div>
<div style="position:absolute;left:10px;top:920px;width:16px;height:16px;border-radius:50%;background:#3a4650"></div>
<div style="position:absolute;left:6px;top:937px;width:24px;height:24px;border-radius:50%;background:#2a343c;border:3px solid #45525c"></div>
<div class="mt"><div class="bar" style="left:1px;top:95px"></div><div class="bar" style="left:11px;top:95px"></div></div><div class="pk">-1</div>
<div class="sc">-0-<br>-6-<br>-12-<br>-18-<br>-24-<br>-30-<br>-36-<br>-42-<br>-48-<br>-54-<br>-60-</div>
<div class="ft"></div><div class="cap" style="top:674px"></div><div class="vb">0.0</div>
<div class="nm" style="background:#3e5058;color:#a0b4bc">ALL VOISES</div><div class="nu">49</div></div>

<div style="position:absolute;left:10px;top:1003px;width:1793px;height:20px;background:#c4d1de;border-top:1px solid #8a98a6"></div>
<div style="position:absolute;left:10px;top:1004px;width:20px;height:19px;background:linear-gradient(#eef2f6,#c8d0d8);border:1px solid #7a8896;font:bold 13px/17px 'Liberation Sans';text-align:center;color:#111">&lt;</div>
<div style="position:absolute;left:572px;top:1005px;width:695px;height:17px;background:linear-gradient(#a0a6ac,#6a7076 40%,#505860);border-radius:2px"></div>
<div style="position:absolute;left:1781px;top:1004px;width:20px;height:19px;background:linear-gradient(#eef2f6,#c8d0d8);border:1px solid #7a8896;font:bold 13px/17px 'Liberation Sans';text-align:center;color:#111">&gt;</div>

<div style="position:absolute;left:1803px;top:93px;width:107px;height:899px;background:#1d2830"></div>
<div style="position:absolute;left:1803px;top:96px;width:105px;height:308px;background:repeating-linear-gradient(#232e36 0 20px,#34444e 20px 22px)"></div>
<div style="position:absolute;left:1803px;top:415px;width:107px;height:2px;background:#3a4a56"></div>
<div style="position:absolute;left:1804px;top:0;width:104px">
<div class="i a" style="top:97px;width:104px;text-align:center">ME LoudnessMaximizer</div>
<div class="i a" style="top:119px;width:104px;text-align:center">Apple 2-Pole Lowpass Filter</div>
<div class="i a" style="top:141px;width:104px;text-align:center">ME LoudnessMaximizer</div>
<div class="i a" style="top:163px;width:104px;text-align:left">RBJ Highpass/Lowpass Filter</div>
<div class="i a" style="top:185px;width:104px;text-align:center">Invisible Limiter</div>
<div class="i a" style="top:207px;width:104px;text-align:center">ReaEQ</div>
<div class="i d" style="top:229px;width:104px;text-align:center">WaveScopeStereo v2</div>
<div class="i d" style="top:251px;width:104px;text-align:center">ISOL8</div>
<div class="i d" style="top:273px;width:104px;text-align:center">TBP Stereo2Mono</div>
<div class="i d" style="top:295px;width:104px;text-align:center">Specan</div>
<div class="i d" style="top:317px;width:104px;text-align:center">ReaSpect V1.05</div>
<div class="i d" style="top:339px;width:104px;text-align:center">NUGEN Visualizer2</div>
</div>
<div style="position:absolute;left:1806px;top:437px;width:102px;height:18px;background:#0b0f12;border-radius:4px"></div>
<div style="position:absolute;left:1814px;top:445px;width:86px;height:2px;background:#666c70"></div>
<div style="position:absolute;left:1849px;top:439px;width:15px;height:11px;background:#3e5a74;border:1px solid #8a9aa8"></div>
<div style="position:absolute;left:1806px;top:453px;width:34px;height:20px;background:#0b0f12;border-radius:0 0 4px 4px;color:#a4b8cc;font-size:11px;line-height:18px;padding-left:4px">center</div>
<div style="position:absolute;left:1806px;top:478px;width:32px;height:506px;border:2px solid #53667a;border-radius:16px"></div>
<div class="b" style="left:1811px;top:484px">M</div><div class="b" style="left:1811px;top:502px">S</div>
<div style="position:absolute;left:1811px;top:528px;width:21px;text-align:center;color:#d0d8e0;font-size:14px;line-height:16px">∞</div>
<div class="b bl" style="left:1811px;top:547px">-□-</div><div class="b" style="left:1811px;top:560px">●</div>
<div class="b bl" style="left:1811px;top:596px">-□-</div><div class="b" style="left:1811px;top:617px">TR</div>
<div style="position:absolute;left:1810px;top:955px;width:24px;height:24px;border-radius:50%;border:2px solid #55687a;background:#27323a;color:#8a9aa8;text-align:center;font-size:14px;line-height:20px">I</div>
<div style="position:absolute;left:1849px;top:466px;width:2px;height:508px;background:#070a0c"></div>
<div class="cap" style="left:1842px;top:595px;height:40px"></div>
<div style="position:absolute;left:1860px;top:461px;width:48px;height:512px;background:#000;overflow:hidden">
 <div style="position:absolute;left:1px;top:107px;width:10px;height:405px;background:linear-gradient(#e02020 0 13px,#3a3a3a 13px 41px,#3a7ee0 41px,#2a60b0)"></div>
 <div style="position:absolute;left:36px;top:107px;width:11px;height:405px;background:linear-gradient(#e02020 0 13px,#3a3a3a 13px 41px,#3a7ee0 41px,#2a60b0)"></div>
 <div style="position:absolute;left:12px;top:47px;width:10px;height:465px;background:linear-gradient(#ff2a00 0%,#ff8a00 8%,#ffee00 16%,#90ff30 28%,#00ff60 45%,#00e8a0 65%,#00b8e0 85%,#0090ff)"></div>
 <div style="position:absolute;left:24px;top:47px;width:10px;height:465px;background:linear-gradient(#ff2a00 0%,#ff8a00 8%,#ffee00 16%,#90ff30 28%,#00ff60 45%,#00e8a0 65%,#00b8e0 85%,#0090ff)"></div>
 <div style="position:absolute;left:0;top:16px;width:48px;color:#e0e0e0;font-size:10px;white-space:nowrap;text-align:center">-0.2 -0.2</div>
 <div style="position:absolute;left:1px;top:55px;font-size:9px;line-height:45px;color:#7a8a96">12<br>6<br>0-<br>6-<br>12-<br>18-<br>24-<br>30-<br>36-</div>
 <div style="position:absolute;left:37px;top:55px;font-size:9px;line-height:45px;color:#7a8a96">12<br>6<br>-0<br>-6<br>-12<br>-18<br>-24<br>-30<br>-36</div>
 <div style="position:absolute;left:0;top:498px;width:48px;color:#7a8a96;font-size:9px;text-align:center">+7.4 +7.7</div>
</div>
<div style="position:absolute;left:1858px;top:975px;width:49px;height:13px;background:#000;color:#fff;font-size:10px;line-height:13px;text-align:center;border-radius:2px">-0.20dB</div>
<div style="position:absolute;left:1803px;top:992px;width:107px;height:31px;background:#a2aab2;font:bold 13px/31px 'Liberation Sans';text-align:center;color:#1a2a3a">MASTER</div>

<div style="position:absolute;left:817px;top:917px;width:121px;height:22px;background:#f2f2f2;border:1px solid #777;font-size:13px;line-height:20px;color:#444;padding-left:4px">Volume: -0.75dB</div>
<svg style="position:absolute;left:800px;top:900px" width="14" height="22" viewBox="0 0 14 22"><path d="M1 1 L1 17 L5 13 L8 20 L10 19 L7 12 L12 12 Z" fill="#fff" stroke="#000" stroke-width="1"/></svg>
</body></html>
